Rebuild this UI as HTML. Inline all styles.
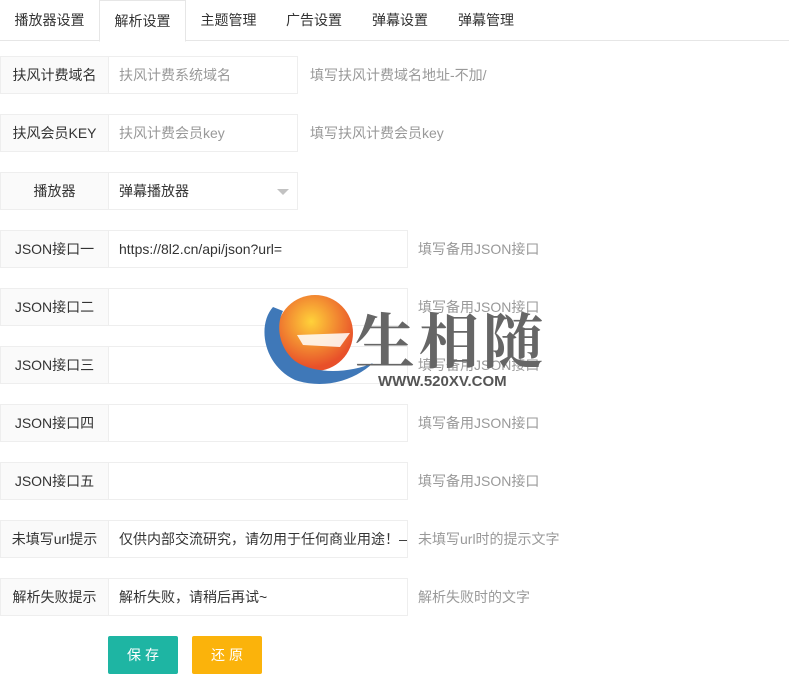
<!DOCTYPE html>
<html><head><meta charset="utf-8"><style>
*{box-sizing:border-box;margin:0;padding:0}
body{width:789px;height:682px;background:#fff;font-family:"Liberation Sans","Noto Sans CJK SC",sans-serif;font-size:14px;color:#333;position:relative;overflow:hidden}
.tabs{position:absolute;left:0;top:0;width:789px;height:41px;border-bottom:1px solid #e6e6e6}
.tab{position:absolute;top:0;height:41px;line-height:41px;text-align:center;font-size:14px;color:#333}
.tab.on{background:#fff;border:1px solid #e6e6e6;border-bottom:1px solid #fff;height:42px}
.row{position:absolute;left:0;height:38px}
.lab{position:absolute;left:0;top:0;width:109px;height:38px;line-height:36px;border:1px solid #eee;background:#fafafa;text-align:center;font-size:14px;color:#333}
.inp{position:absolute;left:108px;top:0;height:38px;line-height:36px;border:1px solid #eee;background:#fff;padding-left:10px;white-space:nowrap;overflow:hidden;color:#333}
.ph{color:#999}
.tip{position:absolute;top:0;line-height:38px;color:#999;white-space:nowrap}
.btn{position:absolute;top:636px;height:38px;width:70px;line-height:38px;text-align:center;color:#fff;border-radius:2px;letter-spacing:4px;padding-left:4px}
</style></head><body>
<div class="tabs">
<div class="tab" style="left:0;width:99px">播放器设置</div>
<div class="tab on" style="left:99px;width:87px">解析设置</div>
<div class="tab" style="left:186px;width:85px">主题管理</div>
<div class="tab" style="left:271px;width:86px">广告设置</div>
<div class="tab" style="left:357px;width:86px">弹幕设置</div>
<div class="tab" style="left:443px;width:86px">弹幕管理</div>
</div>

<div class="row" style="top:56px"><div class="lab">扶风计费域名</div><div class="inp ph" style="width:190px">扶风计费系统域名</div><div class="tip" style="left:310px">填写扶风计费域名地址-不加/</div></div>
<div class="row" style="top:114px"><div class="lab">扶风会员KEY</div><div class="inp ph" style="width:190px">扶风计费会员key</div><div class="tip" style="left:310px">填写扶风计费会员key</div></div>
<div class="row" style="top:172px"><div class="lab">播放器</div><div class="inp" style="width:190px">弹幕播放器<span style="position:absolute;left:168px;top:16px;border:6px solid transparent;border-top:6px solid #c2c2c2;border-bottom:0"></span></div></div>
<div class="row" style="top:230px"><div class="lab">JSON接口一</div><div class="inp" style="width:300px">https://8l2.cn/api/json?url=</div><div class="tip" style="left:418px">填写备用JSON接口</div></div>
<div class="row" style="top:288px"><div class="lab">JSON接口二</div><div class="inp" style="width:300px"></div><div class="tip" style="left:418px">填写备用JSON接口</div></div>
<div class="row" style="top:346px"><div class="lab">JSON接口三</div><div class="inp" style="width:300px"></div><div class="tip" style="left:418px">填写备用JSON接口</div></div>
<div class="row" style="top:404px"><div class="lab">JSON接口四</div><div class="inp" style="width:300px"></div><div class="tip" style="left:418px">填写备用JSON接口</div></div>
<div class="row" style="top:462px"><div class="lab">JSON接口五</div><div class="inp" style="width:300px"></div><div class="tip" style="left:418px">填写备用JSON接口</div></div>
<div class="row" style="top:520px"><div class="lab">未填写url提示</div><div class="inp" style="width:300px">仅供内部交流研究，请勿用于任何商业用途！—</div><div class="tip" style="left:418px">未填写url时的提示文字</div></div>
<div class="row" style="top:578px"><div class="lab">解析失败提示</div><div class="inp" style="width:300px">解析失败，请稍后再试~</div><div class="tip" style="left:418px">解析失败时的文字</div></div>

<div class="btn" style="left:108px;background:#1eb5a3">保存</div>
<div class="btn" style="left:192px;background:#fbb30b">还原</div>

<svg style="position:absolute;left:255px;top:285px" width="300" height="110">
<defs><radialGradient id="g" cx="0.45" cy="0.35" r="0.6"><stop offset="0" stop-color="#ffd23a"/><stop offset="1" stop-color="#e8502a"/></radialGradient></defs>
<circle cx="60" cy="48" r="38" fill="url(#g)"/>
<path d="M18 22 C2 40 8 80 40 95 C70 105 100 95 118 78 C95 88 60 90 40 76 C25 64 20 42 28 26 Z" fill="#3f78b8"/>
<path d="M42 50 L95 48 L85 62 L48 60 Z" fill="#fff" opacity="0.85"/>
<text x="100" y="78" font-family="Noto Serif CJK SC,serif" font-size="60" font-weight="bold" fill="#666" letter-spacing="4">生相随</text>
<text x="123" y="101" font-family="Liberation Sans,sans-serif" font-size="15" font-weight="bold" fill="#555">WWW.520XV.COM</text>
</svg>
</body></html>
